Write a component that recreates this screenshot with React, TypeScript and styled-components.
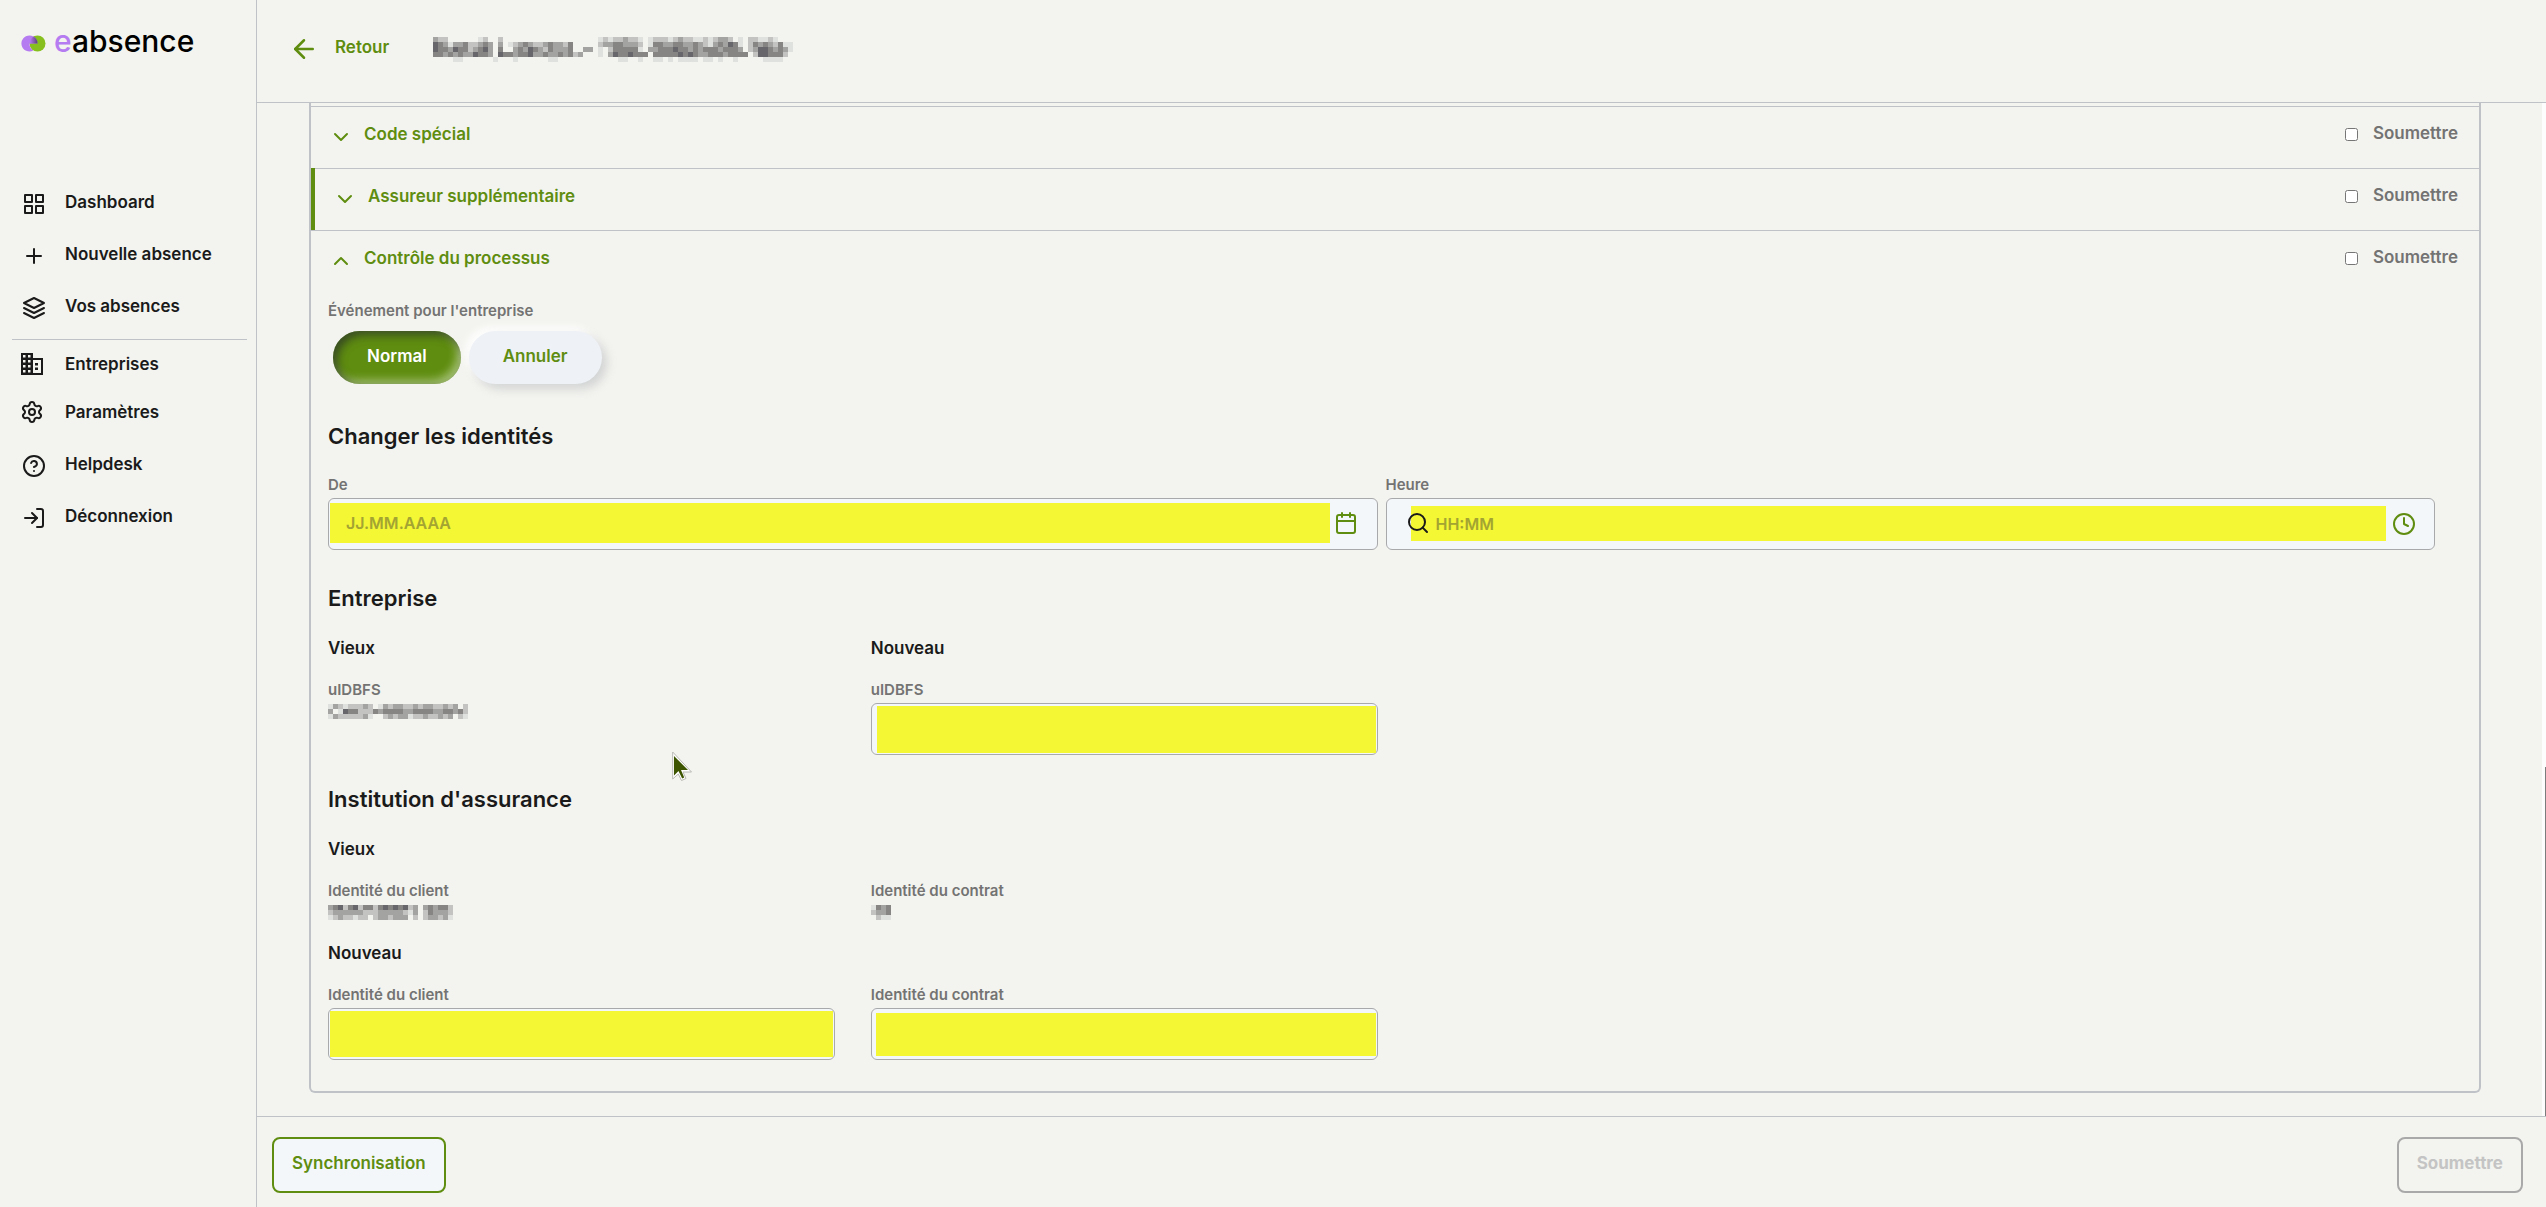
import React, { useState } from "react";
import styled, { createGlobalStyle, css } from "styled-components";
import {
  FiArrowLeft,
  FiCalendar,
  FiChevronDown,
  FiChevronUp,
  FiClock,
  FiGrid,
  FiHelpCircle,
  FiLayers,
  FiLogIn,
  FiPlus,
  FiSearch,
} from "react-icons/fi";
import { Settings } from "lucide-react";

const color = {
  page: "#f3f4ef",
  line: "#bfc2c7",
  fieldLine: "#a8a9ab",
  green: "#5f8d10",
  ink: "#1a1a1a",
  muted: "#737373",
  field: "#f4f7fa",
  mark: "#f4f734",
};

const GlobalStyle = createGlobalStyle`
  * { box-sizing: border-box; }
  body {
    margin: 0;
    background: ${color.page};
    color: ${color.ink};
    font-family: Inter, "Open Sans", sans-serif;
    font-size: 17px;
    font-weight: 600;
    line-height: 24px;
  }
  button, input { font: inherit; }
  svg { display: block; }
`;

const Shell = styled.div`
  display: grid;
  grid-template-columns: 257px minmax(0, 1fr);
  grid-template-rows: minmax(0, 1fr);
  height: 100vh;
`;

const Sidebar = styled.aside`
  border-right: 1px solid ${color.line};
`;

const Brand = styled.a`
  display: flex;
  align-items: flex-start;
  gap: 8px;
  height: 64px;
  margin-bottom: 114px;
  padding: 23px 0 0 21px;
  color: #000;
  font-size: 30px;
  font-weight: 500;
  line-height: 36px;
  text-decoration: none;

  svg {
    margin-top: 12px;
  }
`;

const BrandAccent = styled.span`
  color: #b57bf0;
`;

const NavList = styled.nav`
  display: flex;
  flex-direction: column;
`;

const NavLink = styled.a<{ $compact?: boolean }>`
  display: flex;
  align-items: center;
  gap: ${(p) => (p.$compact ? 21 : 19)}px;
  height: ${(p) => (p.$compact ? 48 : 52)}px;
  padding-left: ${(p) => (p.$compact ? 20 : 22)}px;
  color: ${color.ink};
  text-decoration: none;

  svg {
    width: 24px;
    flex: none;
  }
  span {
    padding-bottom: ${(p) => (p.$compact ? 1 : 5)}px;
  }
`;

const NavDivider = styled.hr`
  width: 235px;
  margin: 5px 0 0 12px;
  border: 0;
  border-top: 1px solid ${color.line};
`;

const NavSpacer = styled.div`
  height: 4px;
`;

const Main = styled.main`
  display: flex;
  flex-direction: column;
  min-width: 0;
  min-height: 0;
`;

const Header = styled.header`
  display: flex;
  flex: none;
  align-items: flex-start;
  height: 103px;
  padding: 34px 32px 0;
  border-bottom: 1px solid ${color.line};
`;

const BackLink = styled.a`
  display: flex;
  gap: 16px;
  margin-right: 44px;
  color: ${color.green};
  text-decoration: none;

  span {
    padding-top: 1px;
  }
`;

const TitleSlot = styled.h1`
  margin: 3px 0 0;
`;

const Scroller = styled.div`
  display: flex;
  flex: 1;
  min-height: 0;
  overflow: hidden;
`;

const Content = styled.div`
  position: relative;
  flex: 1;
  min-width: 0;
  padding: 0 61px 22px 52px;
`;

const Track = styled.div`
  display: flex;
  flex-direction: column;
  justify-content: flex-end;
  align-items: flex-end;
  width: 4px;
  background: #fdfdfd;
`;

const Thumb = styled.div`
  width: 1px;
  height: 34.5%;
  background: #7d7d7d;
`;

const Card = styled.section`
  padding-top: 3px;
  border: 2px solid ${color.line};
  border-top: 0;
  border-radius: 0 0 6px 6px;
`;

const Row = styled.div<{ $marked?: boolean }>`
  display: flex;
  align-items: center;
  justify-content: space-between;
  height: 62px;
  padding: 0 21px 0 18px;
  background: linear-gradient(${color.line}, ${color.line}) top / 100% 1px no-repeat;
  ${(p) =>
    p.$marked &&
    css`
      border-left: 4px solid ${color.green};
    `}
`;

const RowToggle = styled.button`
  display: flex;
  align-items: center;
  gap: 11px;
  padding: 0;
  border: 0;
  background: none;
  color: ${color.green};
  cursor: pointer;

  span {
    padding-bottom: 6px;
  }
`;

const RowCheck = styled.label`
  display: flex;
  align-items: center;
  gap: 15px;
  padding-bottom: 5px;
  color: ${color.muted};

  input {
    width: 13px;
    height: 13px;
    margin: 0;
  }
  span {
    padding-bottom: 3px;
  }
`;

const Form = styled.div`
  padding: 9px 44px 31px 17px;
`;

const Label = styled.label`
  display: block;
  margin-bottom: 3px;
  color: ${color.muted};
  font-size: 15px;
  line-height: 20px;
`;

const Caption = styled.div`
  margin-bottom: 4px;
  color: ${color.muted};
  font-size: 15px;
  line-height: 20px;
`;

const Pills = styled.div`
  display: flex;
  gap: 8px;
  padding: 6px 5px 38px;
`;

const Pill = styled.button<{ $on?: boolean }>`
  height: 53px;
  padding: 0 34px 4px;
  border: 0;
  border-radius: 27px;
  cursor: pointer;
  ${(p) =>
    p.$on
      ? css`
          background: ${color.green};
          color: #fff;
          box-shadow: inset 4px 4px 10px rgba(40, 50, 40, 0.75),
            inset -4px -4px 8px rgba(225, 240, 200, 0.55);
        `
      : css`
          background: #eef1f5;
          color: ${color.green};
          box-shadow: 5px 5px 10px rgba(170, 172, 180, 0.45), -4px -4px 9px #fff;
        `}
`;

const Heading = styled.h2`
  margin: 0 0 25px;
  font-size: 22px;
  font-weight: 600;
  line-height: 28px;
`;

const SubHeading = styled.h3`
  margin: 0 0 20px;
  font-size: 17px;
  font-weight: 600;
  line-height: 23px;
`;

const Halves = styled.div<{ $after: number }>`
  display: grid;
  grid-template-columns: repeat(2, minmax(0, 1fr));
  column-gap: 8px;
  margin-bottom: ${(p) => p.$after}px;
`;

const Pair = styled.div`
  display: grid;
  grid-template-columns: repeat(2, minmax(0, 1fr));
  column-gap: 36px;
`;

const FieldBox = styled.div<{ $inset: string; $gap?: number }>`
  position: relative;
  display: flex;
  align-items: center;
  gap: ${(p) => p.$gap ?? 0}px;
  height: 52px;
  padding: ${(p) => p.$inset};
  border: 1px solid ${color.fieldLine};
  border-radius: 6px;
  background: ${color.field};
`;

const FieldInput = styled.input<{ $start?: number }>`
  flex: 1;
  align-self: stretch;
  min-width: 0;
  padding: 0 0 0 ${(p) => p.$start ?? 16}px;
  border: 0;
  outline: 0;
  background: ${color.mark};
  color: ${color.ink};
  font-size: 16px;

  &::placeholder {
    color: #a3a432;
    opacity: 1;
  }
`;

const FieldButton = styled.button`
  display: flex;
  padding: 0;
  border: 0;
  background: none;
  color: ${color.green};
  cursor: pointer;
`;

const SearchBadge = styled.span`
  position: absolute;
  left: 19px;
  top: 12px;
  display: flex;
  pointer-events: none;
`;

const Footer = styled.footer`
  display: flex;
  flex: none;
  justify-content: space-between;
  align-items: flex-start;
  height: 91px;
  padding: 20px 23px 0 15px;
  border-top: 1px solid ${color.line};
`;

const ActionButton = styled.button`
  height: 56px;
  padding: 0 18px 4px;
  border: 2px solid ${color.green};
  border-radius: 8px;
  background: ${color.field};
  color: ${color.green};
  cursor: pointer;

  &:disabled {
    border-color: #a9a9a9;
    background: transparent;
    color: #c4c4c4;
    font-weight: 700;
    cursor: default;
  }
`;

const Pointer = styled.svg`
  position: absolute;
  left: 415px;
  top: 648px;
  pointer-events: none;
`;

const BuildingIcon = () => (
  <svg width="24" height="24" viewBox="-1 0 24 24" fill="currentColor" fillRule="evenodd" aria-hidden="true">
    <path d="M0 1h12v5h10v17H0zM2 3v2.500h2.500V3zM7 3v2.500h2.500V3zM2 8v2.500h2.500V8zM7 8v2.500h2.500V8zM2 13v2.500h2.500V13zM7 13v2.500h2.500V13zM2 18v2.500h2.500V18zM7 18v2.500h2.500V18zM12 8v13h8V8zM14 11h3v2.500h-3zM14 15.500h3V18h-3z" />
  </svg>
);

const LogoMark = () => (
  <svg width="25" height="17" viewBox="0 0 25 17" aria-hidden="true">
    <defs>
      <linearGradient id="fold" x1="0" y1="0" x2="1" y2="0">
        <stop offset="0" stopColor="#b57bf0" />
        <stop offset="1" stopColor="#5b3f78" />
      </linearGradient>
    </defs>
    <circle cx="16.500" cy="8.500" r="8" fill="#86bf1e" />
    <path d="M8.500.5a8 8 0 1 0 3.800 15A8 8 0 0 1 8.500 8.500h8A8 8 0 0 0 12.300 1.500 8 8 0 0 0 8.500.5z" fill="#b57bf0" />
    <path d="M9 8.500a8 8 0 0 1 3.600-7 8 8 0 0 1 3.900 7z" fill="url(#fold)" />
  </svg>
);

const shades: Record<string, string> = {
  "1": "#dfe1de",
  "2": "#c3c4c2",
  "3": "#a3a3a1",
  "4": "#868584",
  "5": "#67666a",
};

/* Masked personal data: one character per 5px block, a dot is an empty block. */
const Mosaic = ({ rows }: { rows: string[] }) => (
  <svg
    width={Math.max(...rows.map((row) => row.length)) * 5}
    height={rows.length * 5}
    shapeRendering="crispEdges"
    role="img"
    aria-label="Donnée masquée"
  >
    {rows.flatMap((row, y) =>
      row.split("").map((c, x) =>
        shades[c] ? <rect key={`${x}-${y}`} x={x * 5} y={y * 5} width="5" height="5" fill={shades[c]} /> : null,
      ),
    )}
  </svg>
);

const mask = {
  name: [
    "322......12..2...................121223221.12221232211212332.1.221121...",
    "543133422343.3.1234322343324.....233443332.1443344334321343541.243432411",
    "544354423453.4..343543243334..33.1.2444441.3344454434344434443.235543431",
    "443434335443.54434453343343423...1.35445444.4444454543344434444.2554442.",
    "....11......1...1......11............11..1..11.1.1111.11.1..1.....1111..",
  ],
  uid: [
    "132122232.1323322323322323.2",
    "3.15442224344443344443344342",
    "132222231..23233122322323.21",
  ],
  client: [
    "345245244245454523.343442",
    "233333322233333213.243332",
    "12322122.2332333.2.233231",
  ],
  contract: ["1434", "2334", ".211"],
};

interface AccordionRowProps {
  title: string;
  open?: boolean;
  marked?: boolean;
}

const AccordionRow = ({ title, open, marked }: AccordionRowProps) => (
  <Row $marked={marked}>
    <RowToggle type="button" aria-expanded={!!open}>
      {open ? <FiChevronUp size={24} /> : <FiChevronDown size={24} />}
      <span>{title}</span>
    </RowToggle>
    <RowCheck>
      <input type="checkbox" />
      <span>Soumettre</span>
    </RowCheck>
  </Row>
);

interface TextFieldProps {
  id: string;
  label: string;
  inset: string;
}

const TextField = ({ id, label, inset }: TextFieldProps) => (
  <div>
    <Label htmlFor={id}>{label}</Label>
    <FieldBox $inset={inset}>
      <FieldInput id={id} type="text" />
    </FieldBox>
  </div>
);

export default function App() {
  const [event, setEvent] = useState("Normal");

  return (
    <>
      <GlobalStyle />
      <Shell>
        <Sidebar>
          <Brand href="#">
            <LogoMark />
            <span>
              <BrandAccent>e</BrandAccent>absence
            </span>
          </Brand>
          <NavList>
            <NavLink href="#"><FiGrid size={24} /><span>Dashboard</span></NavLink>
            <NavLink href="#"><FiPlus size={24} /><span>Nouvelle absence</span></NavLink>
            <NavLink href="#"><FiLayers size={24} /><span>Vos absences</span></NavLink>
            <NavDivider />
            <NavLink href="#" $compact><BuildingIcon /><span>Entreprises</span></NavLink>
            <NavLink href="#" $compact><Settings size={24} /><span>Paramètres</span></NavLink>
            <NavSpacer />
            <NavLink href="#"><FiHelpCircle size={24} /><span>Helpdesk</span></NavLink>
            <NavLink href="#"><FiLogIn size={24} /><span>Déconnexion</span></NavLink>
          </NavList>
        </Sidebar>
        <Main>
          <Header>
            <BackLink href="#">
              <FiArrowLeft size={30} />
              <span>Retour</span>
            </BackLink>
            <TitleSlot><Mosaic rows={mask.name} /></TitleSlot>
          </Header>
          <Scroller>
            <Content>
              <Card>
                <AccordionRow title="Code spécial" />
                <AccordionRow title="Assureur supplémentaire" marked />
                <AccordionRow title="Contrôle du processus" open />
                <Form>
                  <Caption>Événement pour l'entreprise</Caption>
                  <Pills role="group" aria-label="Événement pour l'entreprise">
                    {["Normal", "Annuler"].map((name) => (
                      <Pill key={name} type="button" $on={event === name} aria-pressed={event === name} onClick={() => setEvent(name)}>
                        {name}
                      </Pill>
                    ))}
                  </Pills>

                  <Heading>Changer les identités</Heading>
                  <Halves $after={34}>
                    <div>
                      <Label htmlFor="from">De</Label>
                      <FieldBox $inset="4px 19px 6px 1px" $gap={4}>
                        <FieldInput id="from" type="text" placeholder="JJ.MM.AAAA" />
                        <FieldButton type="button" aria-label="Choisir une date"><FiCalendar size={24} /></FieldButton>
                      </FieldBox>
                    </div>
                    <div>
                      <Label htmlFor="time">Heure</Label>
                      <FieldBox $inset="7px 18px 8px 24px" $gap={6}>
                        <FieldInput id="time" type="text" placeholder="HH:MM" $start={25} />
                        <SearchBadge><FiSearch size={24} /></SearchBadge>
                        <FieldButton type="button" aria-label="Choisir une heure"><FiClock size={24} /></FieldButton>
                      </FieldBox>
                    </div>
                  </Halves>

                  <Heading>Entreprise</Heading>
                  <Halves $after={30}>
                    <Pair>
                      <div>
                        <SubHeading>Vieux</SubHeading>
                        <Caption>uIDBFS</Caption>
                        <Mosaic rows={mask.uid} />
                      </div>
                      <div>
                        <SubHeading>Nouveau</SubHeading>
                        <TextField id="uid" label="uIDBFS" inset="2px 1px 1px 5px" />
                      </div>
                    </Pair>
                  </Halves>

                  <Heading>Institution d'assurance</Heading>
                  <SubHeading>Vieux</SubHeading>
                  <Halves $after={22}>
                    <Pair>
                      <div>
                        <Caption>Identité du client</Caption>
                        <Mosaic rows={mask.client} />
                      </div>
                      <div>
                        <Caption>Identité du contrat</Caption>
                        <Mosaic rows={mask.contract} />
                      </div>
                    </Pair>
                  </Halves>
                  <SubHeading>Nouveau</SubHeading>
                  <Halves $after={0}>
                    <Pair>
                      <TextField id="client" label="Identité du client" inset="2px 1px 2px 1px" />
                      <TextField id="contract" label="Identité du contrat" inset="4px 1px 3px 4px" />
                    </Pair>
                  </Halves>
                </Form>
              </Card>
              <Pointer width="22" height="32" viewBox="0 0 22 32" aria-hidden="true">
                <path d="M.7 1v27l5.600-5 3.200 6.500 4.500-2-3-6.500h8.500z" fill="#fff" stroke="#b8b8b4" />
                <path d="M2 5v19.500l4.500-4.500 3.700 7.500 2-1-3.200-7.500h7z" fill="#3d5400" />
              </Pointer>
            </Content>
            <Track><Thumb /></Track>
          </Scroller>
          <Footer>
            <ActionButton type="button">Synchronisation</ActionButton>
            <ActionButton type="button" disabled>Soumettre</ActionButton>
          </Footer>
        </Main>
      </Shell>
    </>
  );
}
